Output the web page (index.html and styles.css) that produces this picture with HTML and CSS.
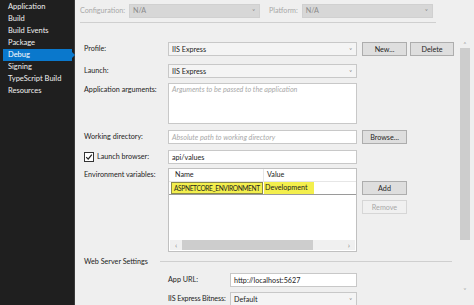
FILE: index.html
```html
<!DOCTYPE html>
<html>
<head>
<meta charset="utf-8">
<link rel="stylesheet" href="styles.css">
</head>
<body>
<nav class="sidebar">
  <div class="nav-item">Application</div>
  <div class="nav-item">Build</div>
  <div class="nav-item">Build Events</div>
  <div class="nav-item">Package</div>
  <div class="nav-item active">Debug</div>
  <div class="nav-item">Signing</div>
  <div class="nav-item">TypeScript Build</div>
  <div class="nav-item">Resources</div>
</nav>
<main class="main">
  <div class="content">
    <div class="topbar">
      <span class="dim-label">Configuration:</span>
      <div class="select disabled cfg"><span>N/A</span><span class="caret">&#709;</span></div>
      <span class="dim-label plat-label">Platform:</span>
      <div class="select disabled plat"><span>N/A</span><span class="caret">&#709;</span></div>
    </div>
    <div class="form">
      <div class="row r-profile">
        <label class="lbl">Profile:</label>
        <div class="select ctl"><span>IIS Express</span><span class="caret">&#709;</span></div>
        <button class="btn">New...</button>
        <button class="btn btn-del">Delete</button>
      </div>
      <div class="row r-launch">
        <label class="lbl">Launch:</label>
        <div class="select ctl"><span>IIS Express</span><span class="caret">&#709;</span></div>
      </div>
      <div class="row r-args">
        <label class="lbl">Application arguments:</label>
        <div class="input ctl textarea"><span class="ph">Arguments to be passed to the application</span></div>
      </div>
      <div class="row r-wd">
        <label class="lbl">Working directory:</label>
        <div class="input ctl"><span class="ph">Absolute path to working directory</span></div>
        <button class="btn">Browse...</button>
      </div>
      <div class="row r-lb">
        <label class="lbl chk-lbl"><span class="checkbox"><svg width="8" height="8" viewBox="0 0 8 8"><path d="M1.2 4.2 L3.2 6.2 L6.8 1.6" fill="none" stroke="#1e1e1e" stroke-width="1.2"/></svg></span>Launch browser:</label>
        <div class="input ctl"><span>api/values</span></div>
      </div>
      <div class="row r-env">
        <label class="lbl">Environment variables:</label>
        <div class="table ctl">
          <div class="thead">
            <div class="c1">Name</div>
            <div class="c2">Value</div>
          </div>
          <div class="trow">
            <div class="c1 hl">ASPNETCORE_ENVIRONMENT</div>
            <div class="c2"><span class="hl2">Development</span></div>
          </div>
          <div class="tfill"></div>
          <div class="hscroll">
            <span class="harrow">&#8249;</span>
            <div class="hthumb"></div>
            <span class="harrow right">&#8250;</span>
          </div>
        </div>
        <div class="btncol">
          <button class="btn">Add</button>
          <button class="btn disabled-btn">Remove</button>
        </div>
      </div>
      <div class="section">
        <span class="section-title">Web Server Settings</span>
        <span class="section-line"></span>
      </div>
      <div class="row sub r-url">
        <label class="lbl2">App URL:</label>
        <div class="input ctl2"><span>http://localhost:5627</span></div>
      </div>
      <div class="row sub r-bit">
        <label class="lbl2">IIS Express Bitness:</label>
        <div class="select ctl2"><span>Default</span><span class="caret">&#709;</span></div>
      </div>
    </div>
  </div>
  <div class="vscroll">
    <span class="varrow">&#708;</span>
    <div class="vthumb"></div>
    <span class="varrow down">&#709;</span>
  </div>
</main>
</body>
</html>
```
FILE: styles.css
```css
* { box-sizing: border-box; }
html, body {
  margin: 0;
  padding: 0;
}
body {
  width: 474px;
  height: 305px;
  overflow: hidden;
  display: flex;
  font-family: Lato, "Noto Sans", sans-serif;
  font-size: 7.2px;
  color: #1e1e1e;
  background: #eeeeee;
}
.sidebar {
  width: 75px;
  flex: none;
  background: #1f1f1f;
  padding-top: 1px;
  border-right: 1px solid #3a3a3a;
}
.nav-item {
  height: 12px;
  line-height: 12px;
  padding-left: 8px;
  color: #f0f0f0;
  font-size: 7.5px;
  white-space: nowrap;
}
.nav-item.active {
  background: #0a78cc;
  margin-left: 3px;
  margin-right: 2px;
  padding-left: 5px;
  position: relative;
  color: #fff;
}
.nav-item.active::after {
  content: "";
  position: absolute;
  right: -3px;
  top: 3px;
  border-left: 3px solid #0a78cc;
  border-top: 3px solid transparent;
  border-bottom: 3px solid transparent;
}
.main {
  flex: 1;
  display: flex;
  background: #efefef;
}
.content {
  flex: 1;
  padding-left: 5px;
}
.topbar {
  display: flex;
  align-items: center;
  height: 23px;
  padding-top: 1px;
  margin-right: 23px;
  border-bottom: 1px solid #cfcfcf;
  padding-bottom: 2px;
}
.dim-label {
  color: #a8a8a8;
  margin-right: 4px;
}
.plat-label { margin-left: 9px; }
.select, .input {
  height: 14px;
  display: flex;
  align-items: center;
  justify-content: space-between;
  background: #fff;
  border: 1px solid #c8c8c8;
  padding: 0 4px 0 3px;
  white-space: nowrap;
  overflow: hidden;
}
.select.disabled {
  background: #d7d7d7;
  border-color: #d0d0d0;
  color: #8a8a8a;
}
.select { background: #f4f4f4; }
.cfg { width: 131px; }
.plat { width: 131px; }
.caret {
  font-size: 6px;
  color: #777;
}
.form {
  padding-left: 4px;
}
.row {
  display: flex;
  align-items: flex-start;
}
.lbl {
  width: 84px;
  flex: none;
  height: 14px;
  line-height: 14px;
  white-space: nowrap;
  display: flex;
  align-items: center;
}
.ctl {
  width: 189px;
  flex: none;
}
.r-profile { margin-top: 19px; }
.r-launch { margin-top: 8px; }
.r-args { margin-top: 5px; }
.r-wd { margin-top: 6px; }
.r-lb { margin-top: 6px; }
.r-env { margin-top: 4px; }
.textarea {
  height: 41px;
  align-items: flex-start;
  padding-top: 1px;
}
.ph {
  color: #a9a9a9;
  font-style: italic;
}
.btn {
  font-family: inherit;
  font-size: 7.2px;
  color: #1e1e1e;
  background: #dedede;
  border: 1px solid #adadad;
  height: 14px;
  width: 45px;
  padding: 0;
  margin-left: 5px;
  flex: none;
}
.btn-del { margin-left: 3px; width: 44px; }
.disabled-btn {
  color: #a8a8a8;
  background: #f0f0f0;
  border-color: #d6d6d6;
}
.checkbox {
  width: 10px;
  height: 10px;
  border: 1px solid #333;
  background: #fff;
  display: inline-flex;
  align-items: center;
  justify-content: center;
  margin-right: 3px;
}
.table {
  height: 84px;
  background: #fff;
  border: 1px solid #c0c0c0;
  display: flex;
  flex-direction: column;
}
.thead, .trow {
  display: flex;
  height: 13px;
  line-height: 12px;
}
.thead {
  border-bottom: 1px solid #e6e6e6;
}
.thead .c1 { padding-left: 6px; }
.thead .c2 { padding-left: 3px; border-left: 1px solid #e6e6e6; }
.c1 { width: 94px; flex: none; white-space: nowrap; overflow: hidden; }
.c2 { flex: 1; }
.trow {
  border-bottom: 1px solid #9a9a9a;
}
.trow .c1 {
  padding-left: 2px;
  margin-left: 2px;
  width: 92px;
  background: #f3ef4d;
  border: 1px solid #8a8a4a;
  line-height: 11px;
  font-size: 6.6px;
  letter-spacing: -0.35px;
}
.trow .c2 {
  padding-left: 1px;
}
.hl2 {
  display: inline-block;
  background: #f3ef4d;
  padding: 0 6px 0 1px;
  height: 12px;
  line-height: 12px;
}
.tfill { flex: 1; }
.hscroll {
  height: 10px;
  margin: 0 1px 1px 1px;
  display: flex;
  align-items: center;
  background: #f0f0f0;
}
.harrow {
  width: 12px;
  text-align: center;
  color: #888;
  font-size: 8px;
  line-height: 10px;
}
.harrow.right { margin-left: auto; }
.hthumb {
  width: 131px;
  height: 10px;
  background: #cdcdcd;
}
.btncol {
  display: flex;
  flex-direction: column;
  padding-top: 13px;
  gap: 5px;
}
.section {
  display: flex;
  align-items: center;
  margin-top: 2px;
  height: 14px;
}
.section-title {
  width: 76px;
  white-space: nowrap;
}
.section-line {
  width: 292px;
  height: 1px;
  background: #cfcfcf;
  margin-top: 1px;
}
.sub { padding-left: 84px; }
.r-url { margin-top: 5px; }
.r-bit { margin-top: 5px; }
.lbl2 {
  width: 62px;
  height: 14px;
  line-height: 14px;
  white-space: nowrap;
  flex: none;
}
.r-bit .lbl2 { letter-spacing: -0.15px; }
.ctl2 { width: 127px; flex: none; }
.vscroll {
  width: 15px;
  flex: none;
  display: flex;
  flex-direction: column;
  align-items: center;
  padding-top: 40px;
  padding-right: 3px;
  padding-bottom: 11px;
}
.varrow {
  font-size: 6px;
  color: #999;
  height: 8px;
  line-height: 8px;
}
.vthumb {
  width: 10px;
  height: 192px;
  background: #cdcdcd;
}
.varrow.down { margin-top: auto; }
```
